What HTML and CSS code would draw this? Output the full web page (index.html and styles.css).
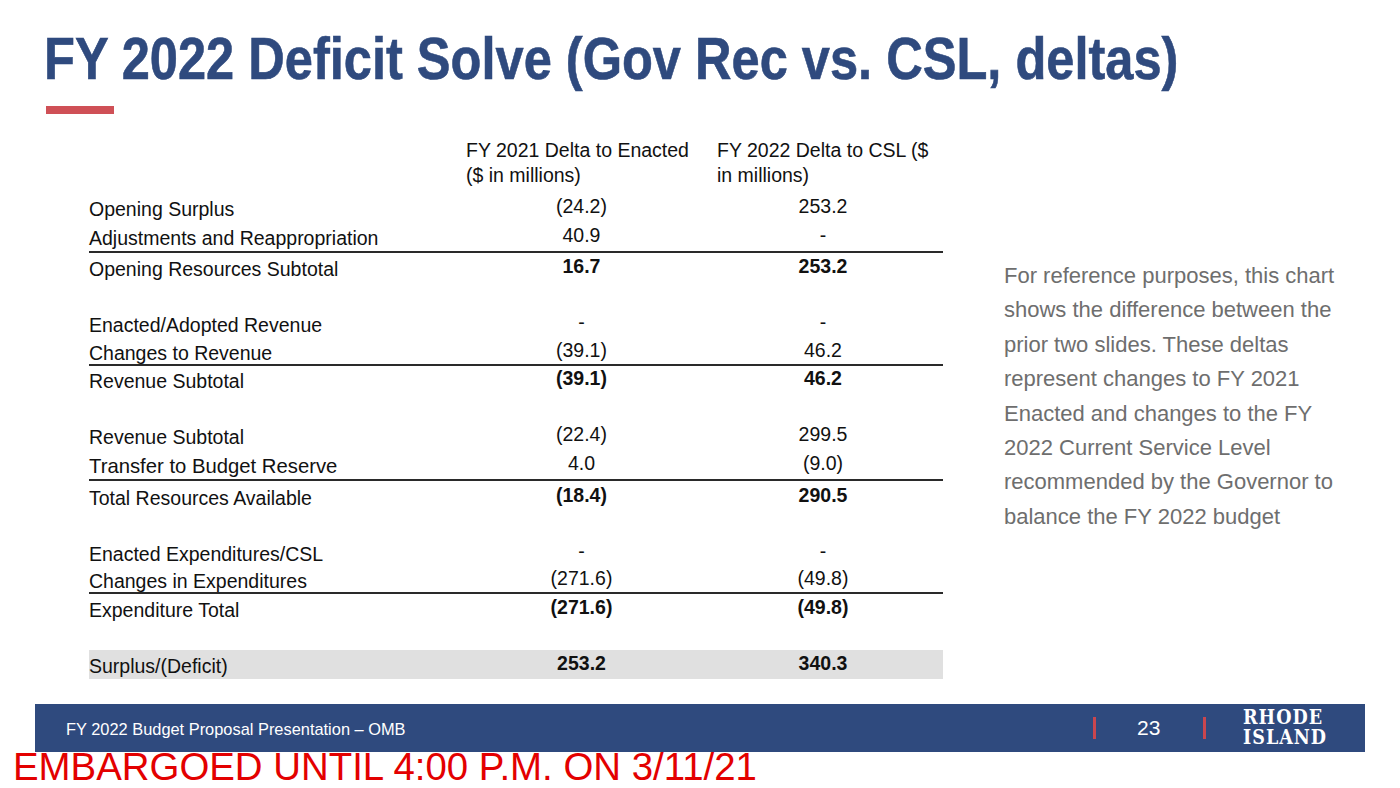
FILE: index.html
```html
<!DOCTYPE html>
<html lang="en">
<head>
<meta charset="utf-8">
<title>FY 2022 Deficit Solve</title>
<link rel="stylesheet" href="styles.css">
</head>
<body>
<div class="slide">
  <h1 class="title"><span class="title-text">FY 2022 Deficit Solve (Gov Rec vs. CSL, deltas)</span></h1>
  <div class="accent"></div>

  <div class="content">
    <div class="table">
      <div class="row head">
        <div class="label"></div>
        <div class="h1">FY 2021 Delta to Enacted<br>($ in millions)</div>
        <div class="h2">FY 2022 Delta to CSL ($<br>in millions)</div>
      </div>

      <div class="row r29"><div class="label">Opening Surplus</div><div class="num">(24.2)</div><div class="num">253.2</div></div>
      <div class="row r31 rule"><div class="label">Adjustments and Reappropriation</div><div class="num">40.9</div><div class="num">-</div></div>
      <div class="row r29 bold"><div class="label">Opening Resources Subtotal</div><div class="num">16.7</div><div class="num">253.2</div></div>
      <div class="spacer s27"></div>

      <div class="row r29"><div class="label">Enacted/Adopted Revenue</div><div class="num">-</div><div class="num">-</div></div>
      <div class="row r28 rule"><div class="label">Changes to Revenue</div><div class="num">(39.1)</div><div class="num">46.2</div></div>
      <div class="row r27 bold"><div class="label">Revenue Subtotal</div><div class="num">(39.1)</div><div class="num">46.2</div></div>
      <div class="spacer s28"></div>

      <div class="row r29"><div class="label">Revenue Subtotal</div><div class="num">(22.4)</div><div class="num">299.5</div></div>
      <div class="row r31 rule"><div class="label big">Transfer to Budget Reserve</div><div class="num">4.0</div><div class="num">(9.0)</div></div>
      <div class="row r30 bold"><div class="label">Total Resources Available</div><div class="num">(18.4)</div><div class="num">290.5</div></div>
      <div class="spacer s27"></div>

      <div class="row r29"><div class="label">Enacted Expenditures/CSL</div><div class="num">-</div><div class="num">-</div></div>
      <div class="row r27 rule"><div class="label">Changes in Expenditures</div><div class="num">(271.6)</div><div class="num">(49.8)</div></div>
      <div class="row r28 bold"><div class="label">Expenditure Total</div><div class="num">(271.6)</div><div class="num">(49.8)</div></div>
      <div class="spacer s28"></div>

      <div class="row r29 bold shaded"><div class="label">Surplus/(Deficit)</div><div class="num">253.2</div><div class="num">340.3</div></div>
    </div>

    <p class="note">For reference purposes, this chart shows the difference between the prior two slides. These deltas represent changes to FY 2021 Enacted and changes to the FY 2022 Current Service Level recommended by the Governor to balance the FY 2022 budget</p>
  </div>

  <footer class="footer">
    <div class="foot-text">FY 2022 Budget Proposal Presentation – OMB</div>
    <div class="foot-right">
      <span class="pipe"></span>
      <span class="page-num">23</span>
      <span class="pipe pipe2"></span>
      <div class="logo">
        <div class="logo-line">RHODE</div>
        <div class="logo-line">ISLAND</div>
      </div>
    </div>
  </footer>

  <div class="embargo">EMBARGOED UNTIL 4:00 P.M. ON 3/11/21</div>
</div>
</body>
</html>
```

FILE: styles.css
```css
html, body {
  margin: 0;
  padding: 0;
  background: #ffffff;
}

.slide {
  position: relative;
  width: 1400px;
  height: 788px;
  overflow: hidden;
  background: #ffffff;
  font-family: "Liberation Sans", Arial, sans-serif;
  color: #111111;
}

.title {
  margin: 0;
  padding: 29px 0 0 44px;
  font-family: "Liberation Sans", Arial, sans-serif;
  font-weight: 700;
  font-size: 59px;
  line-height: 60px;
  color: #2f4a7e;
  white-space: nowrap;
}

.title-text {
  display: inline-block;
  transform: scaleX(0.857);
  transform-origin: left center;
  -webkit-text-stroke: 0.6px #2f4a7e;
}

.accent {
  margin: 17px 0 0 46px;
  width: 68px;
  height: 8px;
  background: #cf5056;
}

.content {
  display: flex;
  align-items: flex-start;
  margin-top: 24px;
  padding-left: 89px;
}

.table {
  width: 854px;
  font-size: 19.5px;
  color: #111111;
}

.row {
  display: grid;
  grid-template-columns: 371px 243px 240px;
  align-items: center;
  box-sizing: border-box;
}

.row.head {
  height: 55px;
  align-items: start;
  line-height: 25px;
}

.row.head .h1 { padding-left: 6px; }
.row.head .h2 { padding-left: 14px; }

.r27 { height: 27px; }
.r28 { height: 28px; }
.r29 { height: 29px; }
.r30 { height: 30px; }
.r31 { height: 31px; }

.s27 { height: 27px; }
.s28 { height: 28px; }

.rule {
  border-bottom: 2px solid #2a2a2a;
}

.label {
  line-height: 22px;
  padding-top: 3px;
  white-space: nowrap;
}

.label.big {
  font-size: 20.3px;
}

.num {
  line-height: 22px;
  padding-bottom: 3px;
  text-align: center;
}

.bold .num {
  font-weight: 700;
}

.shaded {
  background: #e0e0e0;
}

.note {
  margin: 121px 0 0 61px;
  width: 350px;
  font-size: 22px;
  line-height: 34.4px;
  color: #6e6e6e;
}

.footer {
  display: flex;
  align-items: center;
  margin: 25px 0 0 35px;
  width: 1330px;
  height: 48px;
  background: #2f4a7e;
  color: #ffffff;
}

.foot-text {
  padding-left: 31px;
  padding-top: 3px;
  font-size: 16.4px;
}

.foot-right {
  display: flex;
  align-items: center;
  margin-left: auto;
  padding-right: 32px;
}

.pipe {
  display: block;
  width: 3px;
  height: 22px;
  background: #c9464e;
}

.page-num {
  margin-left: 41px;
  width: 24px;
  font-size: 21px;
}

.pipe2 {
  margin-left: 42px;
}

.logo {
  margin-left: 37px;
  width: 90px;
  font-family: "DejaVu Serif Condensed", "DejaVu Serif", serif;
  font-weight: 700;
  font-size: 19.5px;
  letter-spacing: 1px;
}

.logo-line {
  height: 20px;
  line-height: 20px;
}

.embargo {
  position: absolute;
  left: 13px;
  top: 748px;
  font-family: "Liberation Sans", Arial, sans-serif;
  font-size: 38.4px;
  line-height: 38px;
  color: #e30000;
  white-space: nowrap;
}
```
